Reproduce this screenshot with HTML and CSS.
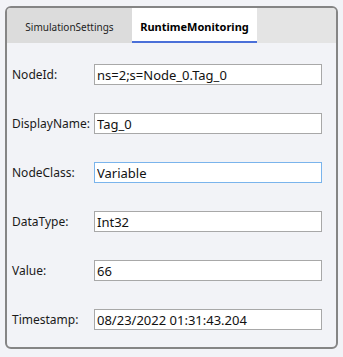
FILE: index.html
```html
<!DOCTYPE html>
<html lang="en">
<head>
    <meta charset="UTF-8">
    <meta name="viewport" content="width=device-width, initial-scale=1.0">
    <title>Node Monitor</title>
    <link rel="stylesheet" href="styles.css">
</head>
<body>
    <div class="panel">
        <div class="tabs">
            <div class="tab">SimulationSettings</div>
            <div class="tab active">RuntimeMonitoring</div>
        </div>
        <div class="fields">
            <div class="row">
                <label for="node-id">NodeId:</label>
                <input type="text" id="node-id" value="ns=2;s=Node_0.Tag_0">
            </div>
            <div class="row">
                <label for="display-name">DisplayName:</label>
                <input type="text" id="display-name" value="Tag_0">
            </div>
            <div class="row">
                <label for="node-class">NodeClass:</label>
                <input type="text" id="node-class" class="focused" value="Variable">
            </div>
            <div class="row">
                <label for="data-type">DataType:</label>
                <input type="text" id="data-type" value="Int32">
            </div>
            <div class="row">
                <label for="value">Value:</label>
                <input type="text" id="value" value="66">
            </div>
            <div class="row">
                <label for="timestamp">Timestamp:</label>
                <input type="text" id="timestamp" value="08/23/2022 01:31:43.204">
            </div>
        </div>
    </div>
</body>
</html>
```

FILE: styles.css
```css
body {
    font-family: "Noto Sans", "Open Sans", sans-serif;
    background-color: #f2f3f7;
    margin: 0;
    padding: 6px 5px 0 5px;
}

.panel {
    width: 333px;
    height: 343px;
    box-sizing: border-box;
    border: 2px solid #858585;
    border-radius: 6px;
    background-color: #f2f3f7;
    overflow: hidden;
    display: flex;
    flex-direction: column;
}

.tabs {
    display: flex;
    height: 35px;
    background-color: #e4e4e4;
    flex-shrink: 0;
}

.tab {
    width: 125px;
    display: flex;
    align-items: center;
    justify-content: center;
    font-size: 10px;
    color: #1e1e1e;
    background-color: #dcdcdc;
    box-sizing: border-box;
    padding-top: 2px;
}

.tab.active {
    background-color: #ffffff;
    font-weight: bold;
    font-size: 11px;
    color: #000;
    border-bottom: 2px solid #4a6fd8;
    padding-top: 4px;
}

.fields {
    display: flex;
    flex-direction: column;
    gap: 28px;
    padding: 21px 0 0 5px;
}

.row {
    display: flex;
    align-items: center;
    height: 21px;
}

label {
    width: 82px;
    font-size: 12px;
    color: #1a1a1a;
    white-space: nowrap;
}

input[type="text"] {
    width: 228px;
    height: 21px;
    box-sizing: border-box;
    border: 1px solid #a8a8a8;
    background-color: #ffffff;
    padding: 0 2px;
    font-family: "Noto Sans", "Open Sans", sans-serif;
    font-size: 13px;
    color: #111;
    outline: none;
    border-radius: 0;
}

input.focused {
    border-color: #7ab4ec;
}
```
